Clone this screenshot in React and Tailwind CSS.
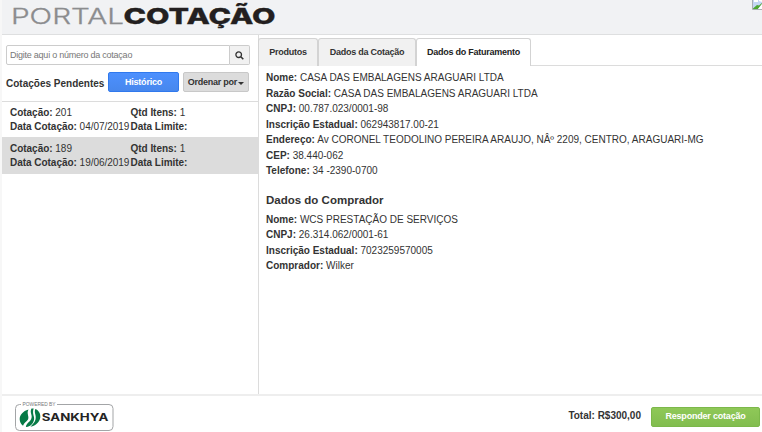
import React, { useState } from 'react'
import clsx from 'clsx'

const quotes = [
  { id: '201', date: '04/07/2019', items: '1', limit: '' },
  { id: '189', date: '19/06/2019', items: '1', limit: '' }
]

const tabs = [
  { id: 'products', label: 'Produtos', width: 'w-[60px]' },
  { id: 'quote', label: 'Dados da Cotação', width: 'w-[98px]' },
  { id: 'billing', label: 'Dados do Faturamento', width: 'w-[115px]' }
]

const billing = [
  ['Nome', 'CASA DAS EMBALAGENS ARAGUARI LTDA'],
  ['Razão Social', 'CASA DAS EMBALAGENS ARAGUARI LTDA'],
  ['CNPJ', '00.787.023/0001-98'],
  ['Inscrição Estadual', '062943817.00-21'],
  [
    'Endereço',
    'Av CORONEL TEODOLINO PEREIRA ARAUJO, NÂº 2209, CENTRO, ARAGUARI-MG'
  ],
  ['CEP', '38.440-062'],
  ['Telefone', '34 -2390-0700']
]

const buyer = [
  ['Nome', 'WCS PRESTAÇÃO DE SERVIÇOS'],
  ['CNPJ', '26.314.062/0001-61'],
  ['Inscrição Estadual', '7023259570005'],
  ['Comprador', 'Wilker']
]

function Field({ label, value }) {
  return (
    <div className="whitespace-nowrap">
      <b>{label}:</b> {value}
    </div>
  )
}

function PortalLogo() {
  return (
    <svg width="290" height="34" viewBox="0 0 290 34">
      <text
        x="9"
        y="23.8"
        fontSize="21.3"
        fontWeight="300"
        fill="#8b8c8e"
        stroke="#8b8c8e"
        strokeWidth="0.3"
        textLength="113"
        lengthAdjust="spacingAndGlyphs"
        className="font-['Inter',sans-serif]"
      >
        PORTAL
      </text>
      <text
        x="121.5"
        y="23.8"
        fontSize="21.3"
        fontWeight="800"
        fill="#231f20"
        stroke="#231f20"
        strokeWidth="0.3"
        textLength="152"
        lengthAdjust="spacingAndGlyphs"
        className="font-['Inter',sans-serif]"
      >
        COTAÇÃO
      </text>
    </svg>
  )
}

function SankhyaLogo() {
  return (
    <svg width="101" height="32" viewBox="0 0 101 32">
      <path
        d="M7 3.500H5.500a4 4 0 0 0-4 4v18a4 4 0 0 0 4 4h89.500a4 4 0 0 0 4-4v-18a4 4 0 0 0-4-4H43"
        fill="none"
        stroke="#a3a5a7"
        strokeWidth="1"
      />
      <text
        x="8.5"
        y="5.3"
        fontSize="4.6"
        fill="#77787b"
        textLength="33"
        lengthAdjust="spacingAndGlyphs"
      >
        POWERED BY
      </text>
      <path
        d="M14.500 8.500C9 10 5.500 14 5.700 18.500c.1 2.600 1.300 4.800 3.300 6.200 1-3.200 3.700-4.200 5-6.300 1.500-2.800-1.800-6 .5-9.900z"
        fill="#067a46"
      />
      <path
        d="M17.500 7.500c-2.300 4.500 1.700 6.500-.4 10.700-1.400 2.900-5 4.100-5.200 7.800 5.900-.7 7.200-4.300 8.100-7.100 1-3.500-2.300-6.200-.3-11.500z"
        fill="#067a46"
      />
      <path
        d="M21.300 8c-1.500 4 1.300 6 .2 10.500-.8 3.500-3.400 5-5 7.300 5.500-1.100 9.300-5.100 9.800-9.600.3-3.600-1.600-7-5-8.200z"
        fill="#067a46"
      />
      <text
        x="27.8"
        y="20.3"
        fontSize="9.8"
        fontWeight="700"
        fill="#242424"
        textLength="66.5"
        lengthAdjust="spacingAndGlyphs"
        className="font-['Inter',sans-serif]"
      >
        SANKHYA
      </text>
    </svg>
  )
}

function BrokenImage() {
  return (
    <svg width="10" height="10" viewBox="0 0 10 10">
      <path d="M.5 0v9.500H10" fill="none" stroke="#a9adb3" />
      <path d="M1 0h9v9H1z" fill="#c4d6f4" />
      <path d="M2 0h4v2H2zM7 0h3v2L7 1z" fill="#fff" />
      <path d="M1 8.500 5 5l2 .5L10 3v1L6 9H1z" fill="#4da733" />
      <path d="m6 9 4-5v5z" fill="#fff" />
    </svg>
  )
}

function QuoteSidebar({ selected, onSelect }) {
  return (
    <aside className="flex w-[257px] shrink-0 flex-col border-r border-[#dcdcdc]">
      <div className="ml-1 mt-[10px] flex h-5 w-[244px]">
        <input
          className="min-w-0 flex-1 rounded-l-[2px] border border-[#ccc] bg-white px-[3px] pt-px text-[9px] tracking-[-0.24px] outline-none placeholder:text-[#777]"
          placeholder="Digite aqui o número da cotaçao"
        />
        <button className="flex w-[20px] items-center justify-center rounded-r-[2px] border border-l-0 border-[#ccc] bg-[#f1f1f1]">
          <svg width="9" height="9" viewBox="0 0 9 9" fill="none" stroke="#333">
            <circle cx="3.7" cy="3.7" r="2.8" strokeWidth="1.3" />
            <path d="m5.800 5.800 2.500 2.500" strokeWidth="1.6" />
          </svg>
        </button>
      </div>
      <div className="ml-1 mt-[7px] flex h-5 items-center">
        <b className="w-[102px] whitespace-nowrap pt-[3px] text-[10px]">
          Cotações Pendentes
        </b>
        <button className="h-5 w-[71px] rounded-[2px] border border-[#3079ed] bg-linear-to-b from-[#4d90fe] to-[#4787ed] pt-px text-[9px] font-bold tracking-[-0.2px] text-white">
          Histórico
        </button>
        <button className="ml-1 flex h-5 w-[66px] items-center justify-center rounded-[2px] border border-[#c8c8c8] bg-[#dcdcdc] pt-px text-[9px] font-bold tracking-[-0.25px] whitespace-nowrap">
          Ordenar por
          <span className="ml-px mt-px border-x-[3px] border-t-[3px] border-x-transparent border-t-[#333]" />
        </button>
      </div>
      <ul className="mt-[9px] border-t border-[#dcdcdc] text-[10px] tracking-[-0.03px]">
        {quotes.map(quote => (
          <li
            key={quote.id}
            className={clsx(
              'grid h-9 cursor-pointer grid-cols-[120.5px_1fr] content-center whitespace-nowrap border-b border-[#dcdcdc] pl-2 leading-[14px]',
              quote.id === selected && 'bg-[#dcdcdc]'
            )}
            onClick={() => onSelect(quote.id)}
          >
            <Field label="Cotação" value={quote.id} />
            <Field label="Qtd Itens" value={quote.items} />
            <Field label="Data Cotação" value={quote.date} />
            <Field label="Data Limite" value={quote.limit} />
          </li>
        ))}
      </ul>
    </aside>
  )
}

export default function App() {
  const [selected, setSelected] = useState('189')
  const [activeTab, setActiveTab] = useState('billing')

  return (
    <div className="flex h-[432px] w-[762px] flex-col overflow-hidden border-l-2 border-[#f7f7f7] bg-white font-['Liberation_Sans',Arial,sans-serif] text-[10px] text-[#333]">
      <header className="flex h-[35px] shrink-0 items-start justify-between border-b border-[#dedfe0] bg-[#f1f2f4]">
        <PortalLogo />
        <BrokenImage />
      </header>

      <main className="flex min-h-0 flex-1">
        <QuoteSidebar selected={selected} onSelect={setSelected} />
        <section className="-ml-px min-w-0 flex-1">
          <nav className="mt-[3px] flex h-7 border-b border-[#dcdcdc]">
            {tabs.map(tab => (
              <button
                key={tab.id}
                className={clsx(
                  '-mb-px h-7 shrink-0 whitespace-nowrap rounded-t-[3px] border border-b-0 border-[#d3d3d3] text-[9px] font-bold tracking-[-0.25px]',
                  tab.width,
                  tab.id === activeTab
                    ? 'bg-white text-[#222]'
                    : 'border-b bg-[#f1f1f1] text-[#333]'
                )}
                onClick={() => setActiveTab(tab.id)}
              >
                {tab.label}
              </button>
            ))}
          </nav>
          <div className="pl-2 pt-1 leading-[15.55px]">
            {billing.map(([label, value]) => (
              <Field key={label} label={label} value={value} />
            ))}
            <h2 className="mb-[3px] mt-[13px] text-[11.5px] font-bold leading-[16px]">
              Dados do Comprador
            </h2>
            <div className="pt-px">
              {buyer.map(([label, value]) => (
                <Field key={label} label={label} value={value} />
              ))}
            </div>
          </div>
        </section>
      </main>

      <footer className="flex h-[38px] shrink-0 items-center border-t-2 border-[#eee] pl-3 pr-[2px]">
        <div className="pt-[6px]">
          <SankhyaLogo />
        </div>
        <b className="ml-auto mt-[3px]">Total: R$300,00</b>
        <button className="ml-[10px] mt-[6px] h-5 w-[109px] rounded-[2px] border border-[#7cb84a] bg-linear-to-b from-[#8fc858] to-[#82bd4f] text-[9px] font-bold tracking-[-0.2px] text-white">
          Responder cotação
        </button>
      </footer>
    </div>
  )
}
